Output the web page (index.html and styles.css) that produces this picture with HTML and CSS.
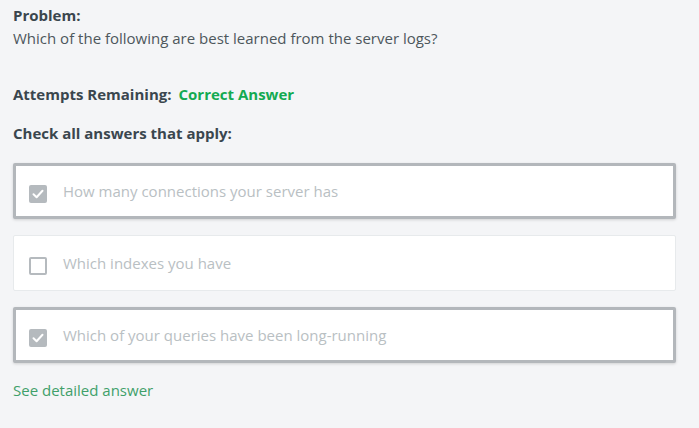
FILE: index.html
```html
<!DOCTYPE html>
<html>
<head>
<meta charset="utf-8">
<link rel="stylesheet" href="styles.css">
</head>
<body>
<div class="page">
  <div class="problem">
    <div class="label">Problem:</div>
    <div class="question">Which of the following are best learned from the server logs?</div>
  </div>
  <div class="attempts"><span class="label">Attempts Remaining:</span><span class="correct">Correct Answer</span></div>
  <div class="label check-all">Check all answers that apply:</div>
  <div class="options">
    <div class="option selected">
      <span class="box checked"><svg viewBox="0 0 18 18" width="18" height="18"><path d="M4.5 9.3 L7.6 12.2 L13.5 5.8" fill="none" stroke="#fff" stroke-width="2" stroke-linecap="round" stroke-linejoin="round"/></svg></span>
      <span class="text">How many connections your server has</span>
    </div>
    <div class="option">
      <span class="box"></span>
      <span class="text">Which indexes you have</span>
    </div>
    <div class="option selected">
      <span class="box checked"><svg viewBox="0 0 18 18" width="18" height="18"><path d="M4.5 9.3 L7.6 12.2 L13.5 5.8" fill="none" stroke="#fff" stroke-width="2" stroke-linecap="round" stroke-linejoin="round"/></svg></span>
      <span class="text">Which of your queries have been long-running</span>
    </div>
  </div>
  <a class="detail">See detailed answer</a>
</div>
</body>
</html>
```

FILE: styles.css
```css
html, body {
  margin: 0;
  padding: 0;
  background: #f4f5f7;
}
body {
  font-family: "Open Sans", Lato, sans-serif;
  font-size: 15px;
  color: #3d4f58;
}
.page {
  width: 663px;
  padding: 6px 0 0 13px;
}
.label {
  font-weight: bold;
  color: #3a464e;
}
.problem .label {
  line-height: 18px;
}
.question {
  margin-top: 3px;
  line-height: 22px;
  color: #4d575c;
}
.attempts {
  margin-top: 34px;
  line-height: 22px;
}
.correct {
  color: #13aa52;
  font-weight: bold;
  margin-left: 7px;
}
.check-all {
  margin-top: 17px;
  line-height: 22px;
}
.options {
  margin-top: 19px;
  display: flex;
  flex-direction: column;
  gap: 16px;
}
.option {
  box-sizing: border-box;
  height: 56px;
  background: #fff;
  border: 1px solid #e7eaec;
  border-radius: 2px;
  display: flex;
  align-items: center;
  padding-left: 15px;
}
.option.selected {
  border: 3px solid #b3b7bb;
  padding-left: 13px;
  box-shadow: 0 1px 3px rgba(0,0,0,0.15);
}
.box {
  box-sizing: border-box;
  width: 18px;
  height: 18px;
  border: 2px solid #b5babe;
  border-radius: 2px;
  margin-top: 5px;
  margin-right: 16px;
  flex: none;
  display: flex;
}
.box.checked {
  border: none;
  background: #b5babe;
}
.text {
  color: #b9c0c3;
  line-height: 22px;
}
.detail {
  display: block;
  margin-top: 16px;
  color: #3fa06a;
  line-height: 22px;
}
```
